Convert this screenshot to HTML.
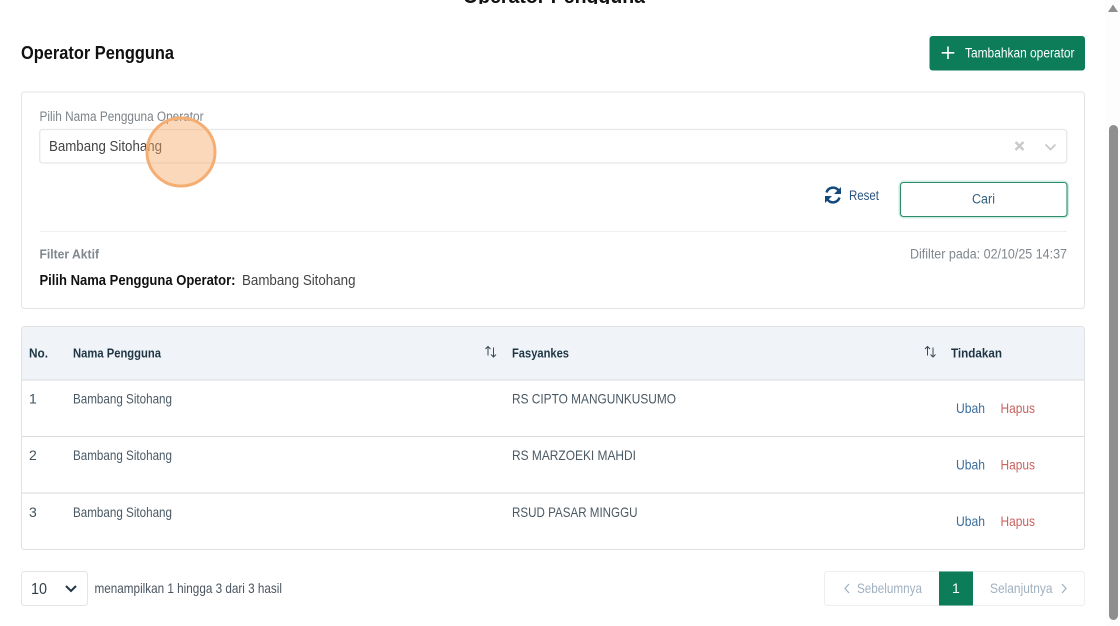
<!DOCTYPE html>
<html lang="id"><head><meta charset="utf-8"><title>Operator Pengguna</title>
<style>
html,body{margin:0;padding:0;background:#fff;width:1120px;height:626px;overflow:hidden}
svg{display:block}
text{font-family:"Liberation Sans",sans-serif;font-size:14px;fill:#3f4d55}
.b{font-weight:700}
</style></head><body>
<svg width="1120" height="626" viewBox="0 0 1120 626" xmlns="http://www.w3.org/2000/svg">
<defs><clipPath id="t"><rect x="440" y="0" width="240" height="4"/></clipPath></defs>
<rect width="1120" height="626" fill="#fff"/>
<g clip-path="url(#t)"><text class="b" x="463" y="3" textLength="182" lengthAdjust="spacingAndGlyphs" style="font-size:20px;fill:#111">Operator Pengguna</text></g>
<text class="b" x="21" y="59" textLength="153" lengthAdjust="spacingAndGlyphs" style="font-size:18.500px;fill:#111">Operator Pengguna</text>

<rect x="929.500" y="36" width="155.500" height="34.500" rx="3" fill="#0c7c59"/>
<path d="M948 46.500V59M941.700 52.800H954.300" stroke="#fff" stroke-width="1.600" fill="none"/>
<text x="965" y="57.500" textLength="109.500" lengthAdjust="spacingAndGlyphs" style="fill:#fff;font-size:13.500px">Tambahkan operator</text>

<rect x="21.500" y="92" width="1063" height="216.500" rx="3" fill="#fff" stroke="#e2e4e6"/>
<text x="39.500" y="121" textLength="164" lengthAdjust="spacingAndGlyphs" style="fill:#7c8389;font-size:13.500px">Pilih Nama Pengguna Operator</text>
<rect x="39.700" y="129.500" width="1027" height="33.500" rx="3" fill="#fff" stroke="#e6e7e8" stroke-width="1.300"/>
<text x="49" y="151" textLength="113" lengthAdjust="spacingAndGlyphs" style="font-size:15px;fill:#444">Bambang Sitohang</text>
<path d="M1015.500 142L1023.500 150M1023.500 142L1015.500 150" stroke="#c9c9c9" stroke-width="2.400" fill="none"/>
<path d="M1045.500 144.500L1050.500 149.500L1055.500 144.500" stroke="#c9c9c9" stroke-width="1.800" fill="none"/>

<path d="M826.500 192.500A6.800 6.800 0 0 1 838.500 190.500M839.500 197.500A6.800 6.800 0 0 1 827.500 199.500" stroke="#134a7c" stroke-width="2.500" fill="none"/>
<path d="M841 187V194H834ZM825 203V196H832Z" fill="#134a7c"/>
<text x="849" y="200" textLength="30" lengthAdjust="spacingAndGlyphs" style="fill:#2a5580;font-size:13.500px">Reset</text>
<rect x="899.500" y="181.500" width="168.500" height="36" rx="4" fill="#fff" stroke="#cfeee3" stroke-width="2"/>
<rect x="900.500" y="182.500" width="166.500" height="34" rx="3" fill="#fff" stroke="#2d8a6c" stroke-width="1.100"/>
<text x="972" y="203.500" textLength="23" lengthAdjust="spacingAndGlyphs" style="fill:#30607c;font-size:13.500px">Cari</text>

<line x1="39.500" y1="231.500" x2="1067" y2="231.500" stroke="#eeeff0"/>
<text class="b" x="39.500" y="258.500" textLength="59.500" lengthAdjust="spacingAndGlyphs" style="fill:#80878d;font-size:13px">Filter Aktif</text>
<text x="910" y="258.500" textLength="157" lengthAdjust="spacingAndGlyphs" style="fill:#80878d;font-size:13.500px">Difilter pada: 02/10/25 14:37</text>
<text class="b" x="39.500" y="285" textLength="196" lengthAdjust="spacingAndGlyphs" style="font-size:15px;fill:#111">Pilih Nama Pengguna Operator:</text>
<text x="242" y="285" textLength="113.500" lengthAdjust="spacingAndGlyphs" style="font-size:15px;fill:#444">Bambang Sitohang</text>

<rect x="21.500" y="326.500" width="1063" height="223" rx="3" fill="#fff" stroke="#dfe1e3"/>
<path d="M22 380V329.500A3 3 0 0 1 25 327H1081A3 3 0 0 1 1084 329.500V380Z" fill="#f0f3f8"/>
<line x1="22" y1="380" x2="1084" y2="380" stroke="#e3e5e8" stroke-width="1.500"/>
<line x1="22" y1="436.500" x2="1084" y2="436.500" stroke="#d8dadc"/>
<line x1="22" y1="493" x2="1084" y2="493" stroke="#d8dadc"/>

<text class="b" x="29" y="357.500" textLength="19" lengthAdjust="spacingAndGlyphs" style="fill:#1e3644;font-size:13px">No.</text>
<text class="b" x="73" y="357.500" textLength="88" lengthAdjust="spacingAndGlyphs" style="fill:#1e3644;font-size:13px">Nama Pengguna</text>
<text class="b" x="512" y="357.500" textLength="57" lengthAdjust="spacingAndGlyphs" style="fill:#1e3644;font-size:13px">Fasyankes</text>
<text class="b" x="951" y="357.500" textLength="51" lengthAdjust="spacingAndGlyphs" style="fill:#1e3644;font-size:13px">Tindakan</text>
<g stroke="#3a4a55" stroke-width="1" fill="none">
<path d="M488 355.500V346.500M485.500 349L488 346.500L490.500 349M493.500 347.500V357M491 354.500L493.500 357L496 354.500"/>
<path d="M927.500 355.500V346.500M925 349L927.500 346.500L930 349M933 347.500V357M930.500 354.500L933 357L935.500 354.500"/>
</g>

<text x="29" y="403.500" style="fill:#3f5360">1</text>
<text x="73" y="403.500" textLength="99" lengthAdjust="spacingAndGlyphs" style="fill:#4a5964">Bambang Sitohang</text>
<text x="512" y="403.500" textLength="164" lengthAdjust="spacingAndGlyphs" style="fill:#4a5964">RS CIPTO MANGUNKUSUMO</text>
<text x="956" y="413" textLength="29" lengthAdjust="spacingAndGlyphs" style="fill:#3a6f9f">Ubah</text>
<text x="1000.500" y="413" textLength="34.500" lengthAdjust="spacingAndGlyphs" style="fill:#c9625f">Hapus</text>

<text x="29" y="460" style="fill:#3f5360">2</text>
<text x="73" y="460" textLength="99" lengthAdjust="spacingAndGlyphs" style="fill:#4a5964">Bambang Sitohang</text>
<text x="512" y="460" textLength="124" lengthAdjust="spacingAndGlyphs" style="fill:#4a5964">RS MARZOEKI MAHDI</text>
<text x="956" y="469.500" textLength="29" lengthAdjust="spacingAndGlyphs" style="fill:#3a6f9f">Ubah</text>
<text x="1000.500" y="469.500" textLength="34.500" lengthAdjust="spacingAndGlyphs" style="fill:#c9625f">Hapus</text>

<text x="29" y="517" style="fill:#3f5360">3</text>
<text x="73" y="517" textLength="99" lengthAdjust="spacingAndGlyphs" style="fill:#4a5964">Bambang Sitohang</text>
<text x="512" y="517" textLength="125.500" lengthAdjust="spacingAndGlyphs" style="fill:#4a5964">RSUD PASAR MINGGU</text>
<text x="956" y="526" textLength="29" lengthAdjust="spacingAndGlyphs" style="fill:#3a6f9f">Ubah</text>
<text x="1000.500" y="526" textLength="34.500" lengthAdjust="spacingAndGlyphs" style="fill:#c9625f">Hapus</text>

<rect x="21.500" y="571.500" width="66" height="34" rx="3" fill="#fff" stroke="#e2e4e6"/>
<text x="31" y="594" textLength="16" lengthAdjust="spacingAndGlyphs" style="font-size:16px;fill:#30404a">10</text>
<path d="M66 586L71 591L76 586" stroke="#1e3644" stroke-width="2" fill="none"/>
<text x="94.500" y="593" textLength="187.500" lengthAdjust="spacingAndGlyphs" style="fill:#4a5560">menampilkan 1 hingga 3 dari 3 hasil</text>

<rect x="824.500" y="571.500" width="260" height="34" rx="3" fill="#fff" stroke="#eceef0"/>
<rect x="939" y="571.500" width="34" height="34" fill="#0c7c59"/>
<text x="952" y="593" style="fill:#fff">1</text>
<path d="M849 584L845 588.500L849 593M1062 584L1066 588.500L1062 593" stroke="#a0b0c0" stroke-width="1.200" fill="none"/>
<text x="857" y="593" textLength="65" lengthAdjust="spacingAndGlyphs" style="fill:#a0b0c0">Sebelumnya</text>
<text x="990" y="593" textLength="62.500" lengthAdjust="spacingAndGlyphs" style="fill:#a0b0c0">Selanjutnya</text>

<circle cx="181" cy="152" r="34" fill="#f7a866" fill-opacity=".45" stroke="#f4ae73" stroke-width="3"/>

<rect x="1105" y="0" width="15" height="626" fill="#fdfdfd"/>
<rect x="1109" y="125" width="9" height="495" rx="4.500" fill="#8f8f8f"/>
<path d="M1108 12H1118L1113 4.500Z" fill="#8f8f8f"/>
</svg>
</body></html>
